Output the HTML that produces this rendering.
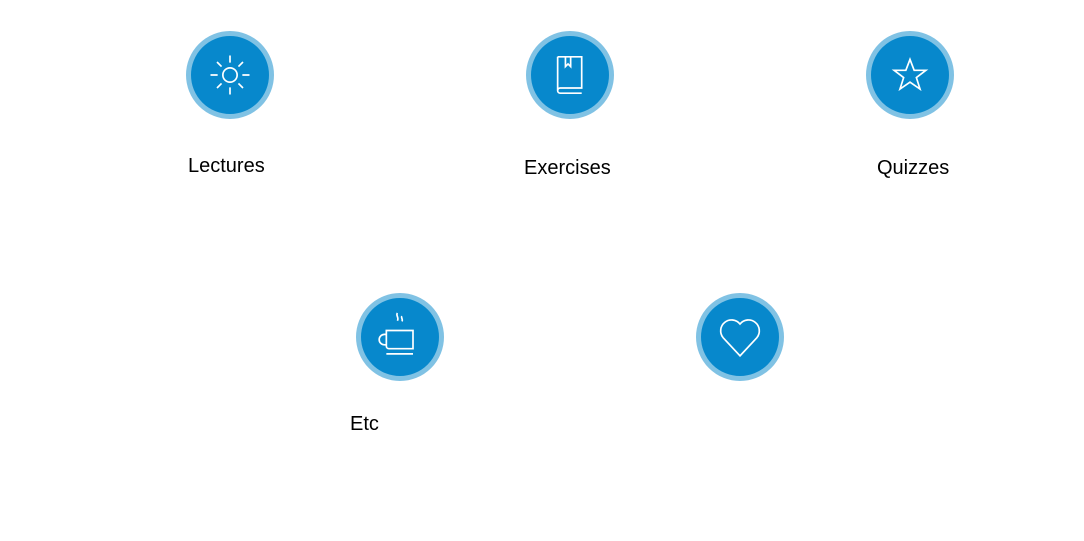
<!DOCTYPE html>
<html><head><style>
body{margin:0;width:1084px;height:541px;background:#fff;position:relative;overflow:hidden;font-family:"Liberation Sans",sans-serif}
.c{position:absolute;width:88px;height:88px;border-radius:50%;background:#0788cc;box-sizing:border-box;border:5px solid #80c2e4}
.c svg{position:absolute;left:13px;top:13px}
.t{position:absolute;font-size:20px;color:#000;line-height:1}
</style></head><body>
<div class="c" style="left:186px;top:31px"><svg width="52" height="52" viewBox="0 0 40 40" fill="none" stroke="#fff" stroke-width="1.3"><circle cx="20" cy="20" r="5.5"/><path d="M20 5v5.5M20 29.5v5.5M5 20h5.5M29.5 20h5.5M10 10l3.5 3.5M26.5 26.5l3.5 3.5M30 10l-3.5 3.5M13.5 26.5L10 30"/></svg></div>
<div class="c" style="left:526px;top:31px"><svg width="52" height="52" viewBox="0 0 40 40" fill="none" stroke="#fff" stroke-width="1.3"><path d="M10.5 6h18.5v24H12.5a2 2 0 0 0 0 4H29M10.5 6v26M16.5 6v7.5l2-2 2 2V6"/></svg></div>
<div class="c" style="left:866px;top:31px"><svg width="52" height="52" viewBox="0 0 40 40" fill="none" stroke="#fff" stroke-width="1.3"><path d="M20 8l3.2 8.4h9l-7.3 5.6 2.8 8.8L20 25.5l-7.7 5.3 2.8-8.8-7.3-5.6h9z"/></svg></div>
<div class="c" style="left:356px;top:293px"><svg width="52" height="52" viewBox="0 0 40 40" fill="none" stroke="#fff" stroke-width="1.3"><path d="M18 1.5c-1.5 2 1.5 3.5 0 6M21.5 4c-1 1.2 1 2.2 0 4M9.5 15h20.5v14H11.5a2 2 0 0 1-2-2zM9.5 18h-1.5a4 4 0 0 0 0 8h1.5M9.5 33h20.5"/></svg></div>
<div class="c" style="left:696px;top:293px"><svg width="52" height="52" viewBox="0 0 40 40" fill="none" stroke="#fff" stroke-width="1.3"><path d="M20 34.5L7 20.5a7.5 7.5 0 0 1 13-10.5 7.5 7.5 0 0 1 13 10.5z"/></svg></div>
<div class="t" style="left:188px;top:156px">Lectures</div>
<div class="t" style="left:524px;top:158px">Exercises</div>
<div class="t" style="left:877px;top:158px">Quizzes</div>
<div class="t" style="left:350px;top:414px">Etc</div>
</body></html>
